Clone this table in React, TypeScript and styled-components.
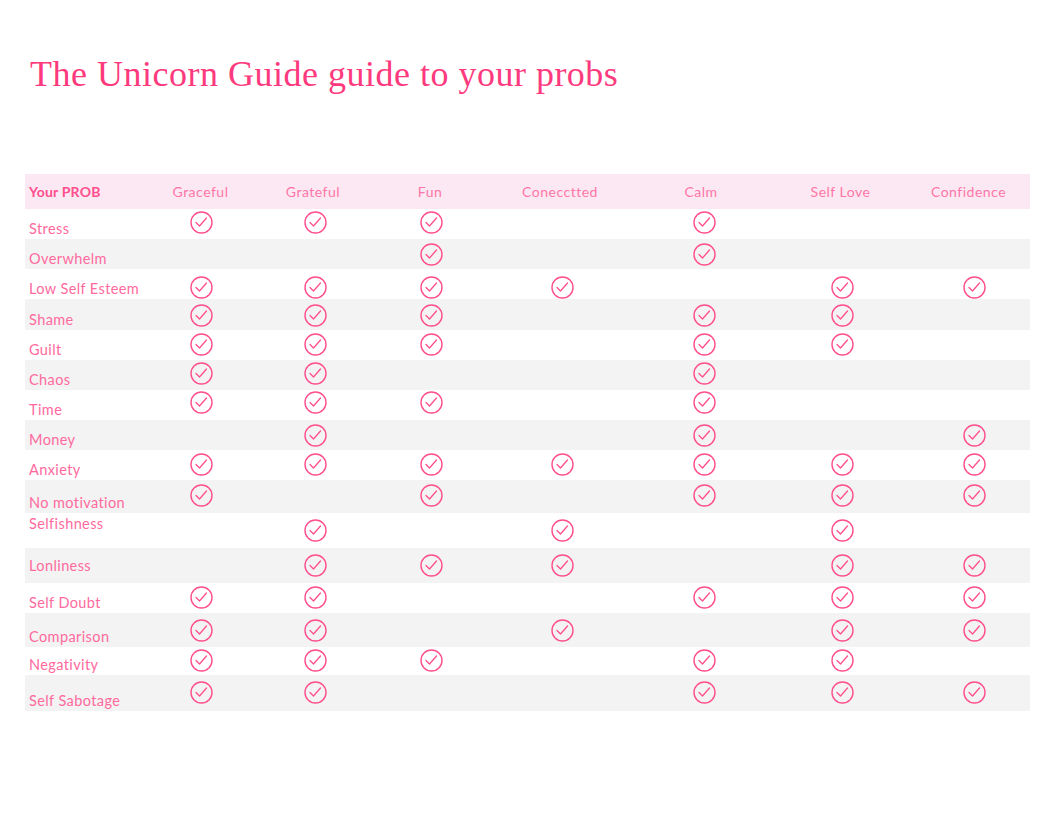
import React from "react";
import styled, { createGlobalStyle } from "styled-components";

const GlobalStyle = createGlobalStyle`
  html, body { margin: 0; padding: 0; background: #ffffff; }
  body { font-family: "Lato", "Open Sans", sans-serif; }
`;

const COLS = "118px 115px 110px 124px 136px 146px 133px 123px";

const Page = styled.div`
  width: 1056px;
  height: 816px;
  padding: 52px 26px 0 25px;
  box-sizing: border-box;
  background: #ffffff;
  overflow: hidden;
`;

const Title = styled.h1`
  margin: 0 0 0 5px;
  font-family: "Liberation Serif", "DejaVu Serif", serif;
  font-weight: 400;
  font-size: 36px;
  line-height: 44px;
  letter-spacing: 0.5px;
  color: #fd3a7d;
`;

const Table = styled.div`
  margin-top: 78px;
  display: flex;
  flex-direction: column;
`;

const HeaderRow = styled.div`
  display: grid;
  grid-template-columns: ${COLS};
  height: 35px;
  background: #fce8f2;
`;

const HeadCell = styled.div<{ $first?: boolean }>`
  display: flex;
  align-items: center;
  justify-content: ${(p) => (p.$first ? "flex-start" : "center")};
  padding-left: ${(p) => (p.$first ? "4px" : "0")};
  font-size: 14px;
  letter-spacing: ${(p) => (p.$first ? "0.2px" : "0.5px")};
  font-weight: ${(p) => (p.$first ? 700 : 400)};
  color: ${(p) => (p.$first ? "#ff4f8e" : "#ff76a8")};
`;

const Row = styled.div<{ $h: number; $alt: boolean }>`
  display: grid;
  grid-template-columns: ${COLS};
  height: ${(p) => p.$h}px;
  background: ${(p) => (p.$alt ? "#f3f3f3" : "#ffffff")};
`;

const Label = styled.div<{ $align: "start" | "center" | "end" }>`
  display: flex;
  align-items: ${(p) =>
    p.$align === "start" ? "flex-start" : p.$align === "center" ? "center" : "flex-end"};
  padding: ${(p) => (p.$align === "start" ? "2px 0 0 4px" : p.$align === "end" ? "0 0 2px 4px" : "0 0 0 4px")};
  font-size: 14.5px;
  line-height: 17px;
  letter-spacing: 0.4px;
  color: #ff6a9e;
  white-space: nowrap;
`;

const CheckCell = styled.div<{ $top: number; $shift: number }>`
  display: flex;
  justify-content: center;
  align-items: flex-start;
  padding-top: ${(p) => p.$top}px;
  padding-left: ${(p) => p.$shift * 2}px;
`;

const CheckIcon = () => (
  <svg width="23" height="23" viewBox="0 0 23 23" fill="none">
    <circle cx="11.5" cy="11.5" r="10.5" stroke="#ff4f8e" strokeWidth="1.4" />
    <path
      d="M6 11.5 L9.5 15 L16.5 7"
      stroke="#ff4f8e"
      strokeWidth="1.3"
      strokeLinecap="round"
      strokeLinejoin="round"
    />
  </svg>
);

const headers = ["Graceful", "Grateful", "Fun", "Conecctted", "Calm", "Self Love", "Confidence"];
const shifts = [0.5, 2, 1, 2, 3, 1.5, 5.5];

type RowData = {
  label: string;
  h: number;
  top: number;
  align: "start" | "center" | "end";
  checks: number[];
};

const rows: RowData[] = [
  { label: "Stress", h: 30, top: 2, align: "end", checks: [1, 1, 1, 0, 1, 0, 0] },
  { label: "Overwhelm", h: 30, top: 4, align: "end", checks: [0, 0, 1, 0, 1, 0, 0] },
  { label: "Low Self Esteem", h: 30, top: 7, align: "end", checks: [1, 1, 1, 1, 0, 1, 1] },
  { label: "Shame", h: 31, top: 5, align: "end", checks: [1, 1, 1, 0, 1, 1, 0] },
  { label: "Guilt", h: 30, top: 3, align: "end", checks: [1, 1, 1, 0, 1, 1, 0] },
  { label: "Chaos", h: 30, top: 2, align: "end", checks: [1, 1, 0, 0, 1, 0, 0] },
  { label: "Time", h: 30, top: 1, align: "end", checks: [1, 1, 1, 0, 1, 0, 0] },
  { label: "Money", h: 30, top: 4, align: "end", checks: [0, 1, 0, 0, 1, 0, 1] },
  { label: "Anxiety", h: 30, top: 3, align: "end", checks: [1, 1, 1, 1, 1, 1, 1] },
  { label: "No motivation", h: 33, top: 4, align: "end", checks: [1, 0, 1, 0, 1, 1, 1] },
  { label: "Selfishness", h: 35, top: 6, align: "start", checks: [0, 1, 0, 1, 0, 1, 0] },
  { label: "Lonliness", h: 35, top: 6, align: "center", checks: [0, 1, 1, 1, 0, 1, 1] },
  { label: "Self Doubt", h: 30, top: 3, align: "end", checks: [1, 1, 0, 0, 1, 1, 1] },
  { label: "Comparison", h: 34, top: 6, align: "end", checks: [1, 1, 0, 1, 0, 1, 1] },
  { label: "Negativity", h: 28, top: 2, align: "end", checks: [1, 1, 1, 0, 1, 1, 0] },
  { label: "Self Sabotage", h: 36, top: 6, align: "end", checks: [1, 1, 0, 0, 1, 1, 1] },
];

export default function App() {
  return (
    <Page>
      <GlobalStyle />
      <Title>The Unicorn Guide guide to your probs</Title>
      <Table>
        <HeaderRow>
          <HeadCell $first>Your PROB</HeadCell>
          {headers.map((h) => (
            <HeadCell key={h}>{h}</HeadCell>
          ))}
        </HeaderRow>
        {rows.map((r, i) => (
          <Row key={r.label} $h={r.h} $alt={i % 2 === 1}>
            <Label $align={r.align}>{r.label}</Label>
            {r.checks.map((c, j) => (
              <CheckCell key={j} $top={r.top} $shift={shifts[j]}>
                {c ? <CheckIcon /> : null}
              </CheckCell>
            ))}
          </Row>
        ))}
      </Table>
    </Page>
  );
}
